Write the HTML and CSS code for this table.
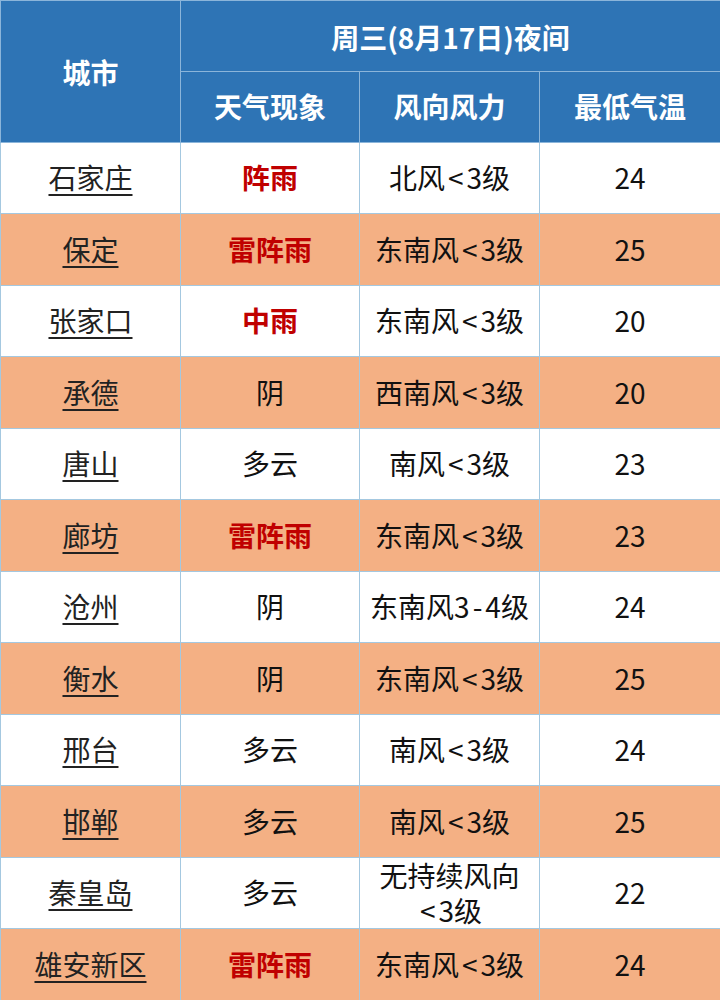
FILE: index.html
```html
<!DOCTYPE html>
<html lang="zh-CN">
<head>
<meta charset="utf-8">
<link rel="stylesheet" href="styles.css">
</head>
<body>
<table class="weather">
  <colgroup>
    <col class="c1"><col class="c2"><col class="c3"><col class="c4">
  </colgroup>
  <thead>
    <tr class="h1">
      <th rowspan="2">城市</th>
      <th colspan="3">周三(8月17日)夜间</th>
    </tr>
    <tr class="h2">
      <th>天气现象</th>
      <th>风向风力</th>
      <th>最低气温</th>
    </tr>
  </thead>
  <tbody>
    <tr class="w r71"><td><span class="city">石家庄</span></td><td class="red">阵雨</td><td>北风<span class="sym">&lt;</span>3级</td><td>24</td></tr>
    <tr class="o r72"><td><span class="city">保定</span></td><td class="red">雷阵雨</td><td>东南风<span class="sym">&lt;</span>3级</td><td>25</td></tr>
    <tr class="w r71"><td><span class="city">张家口</span></td><td class="red">中雨</td><td>东南风<span class="sym">&lt;</span>3级</td><td>20</td></tr>
    <tr class="o r72"><td><span class="city">承德</span></td><td>阴</td><td>西南风<span class="sym">&lt;</span>3级</td><td>20</td></tr>
    <tr class="w r71"><td><span class="city">唐山</span></td><td>多云</td><td>南风<span class="sym">&lt;</span>3级</td><td>23</td></tr>
    <tr class="o r72"><td><span class="city">廊坊</span></td><td class="red">雷阵雨</td><td>东南风<span class="sym">&lt;</span>3级</td><td>23</td></tr>
    <tr class="w r71"><td><span class="city">沧州</span></td><td>阴</td><td>东南风3<span class="sym">-</span>4级</td><td>24</td></tr>
    <tr class="o r72"><td><span class="city">衡水</span></td><td>阴</td><td>东南风<span class="sym">&lt;</span>3级</td><td>25</td></tr>
    <tr class="w r71"><td><span class="city">邢台</span></td><td>多云</td><td>南风<span class="sym">&lt;</span>3级</td><td>24</td></tr>
    <tr class="o r72"><td><span class="city">邯郸</span></td><td>多云</td><td>南风<span class="sym">&lt;</span>3级</td><td>25</td></tr>
    <tr class="w r71"><td><span class="city">秦皇岛</span></td><td>多云</td><td class="two">无持续风向<br><span class="sym">&lt;</span>3级</td><td>22</td></tr>
    <tr class="o r72"><td><span class="city">雄安新区</span></td><td class="red">雷阵雨</td><td>东南风<span class="sym">&lt;</span>3级</td><td>24</td></tr>
  </tbody>
</table>
</body>
</html>
```

FILE: styles.css
```css
html, body {
  margin: 0;
  padding: 0;
  background: #ffffff;
}

.weather {
  width: 720px;
  border-collapse: collapse;
  table-layout: fixed;
  font-family: "Noto Sans CJK SC", "Noto Sans", sans-serif;
  font-size: 28px;
  color: #111111;
}

.c1 { width: 180px; }
.c2 { width: 179px; }
.c3 { width: 180px; }
.c4 { width: 181px; }

.weather th,
.weather td {
  border: 1px solid #a4c8e0;
  padding: 0;
  text-align: center;
  vertical-align: middle;
  line-height: 1.35;
}

.weather th {
  background: #2e74b5;
  color: #ffffff;
  font-weight: 700;
  border-color: #8bb5da;
}

.weather .h1 th { padding-top: 3px; }
.h1 { height: 71px; }
.h2 { height: 71px; }

.r71 { height: 71px; }
.r72 { height: 72px; }

.w td { background: #ffffff; }
.o td { background: #f4b084; }

.city {
  color: #222222;
  text-decoration: underline;
  text-decoration-thickness: 2px;
  text-underline-offset: 5px;
}

.sym {
  margin: 0 3px;
}

.red {
  color: #c00000;
  font-weight: 700;
}

.weather td.two {
  line-height: 35px;
}
```
